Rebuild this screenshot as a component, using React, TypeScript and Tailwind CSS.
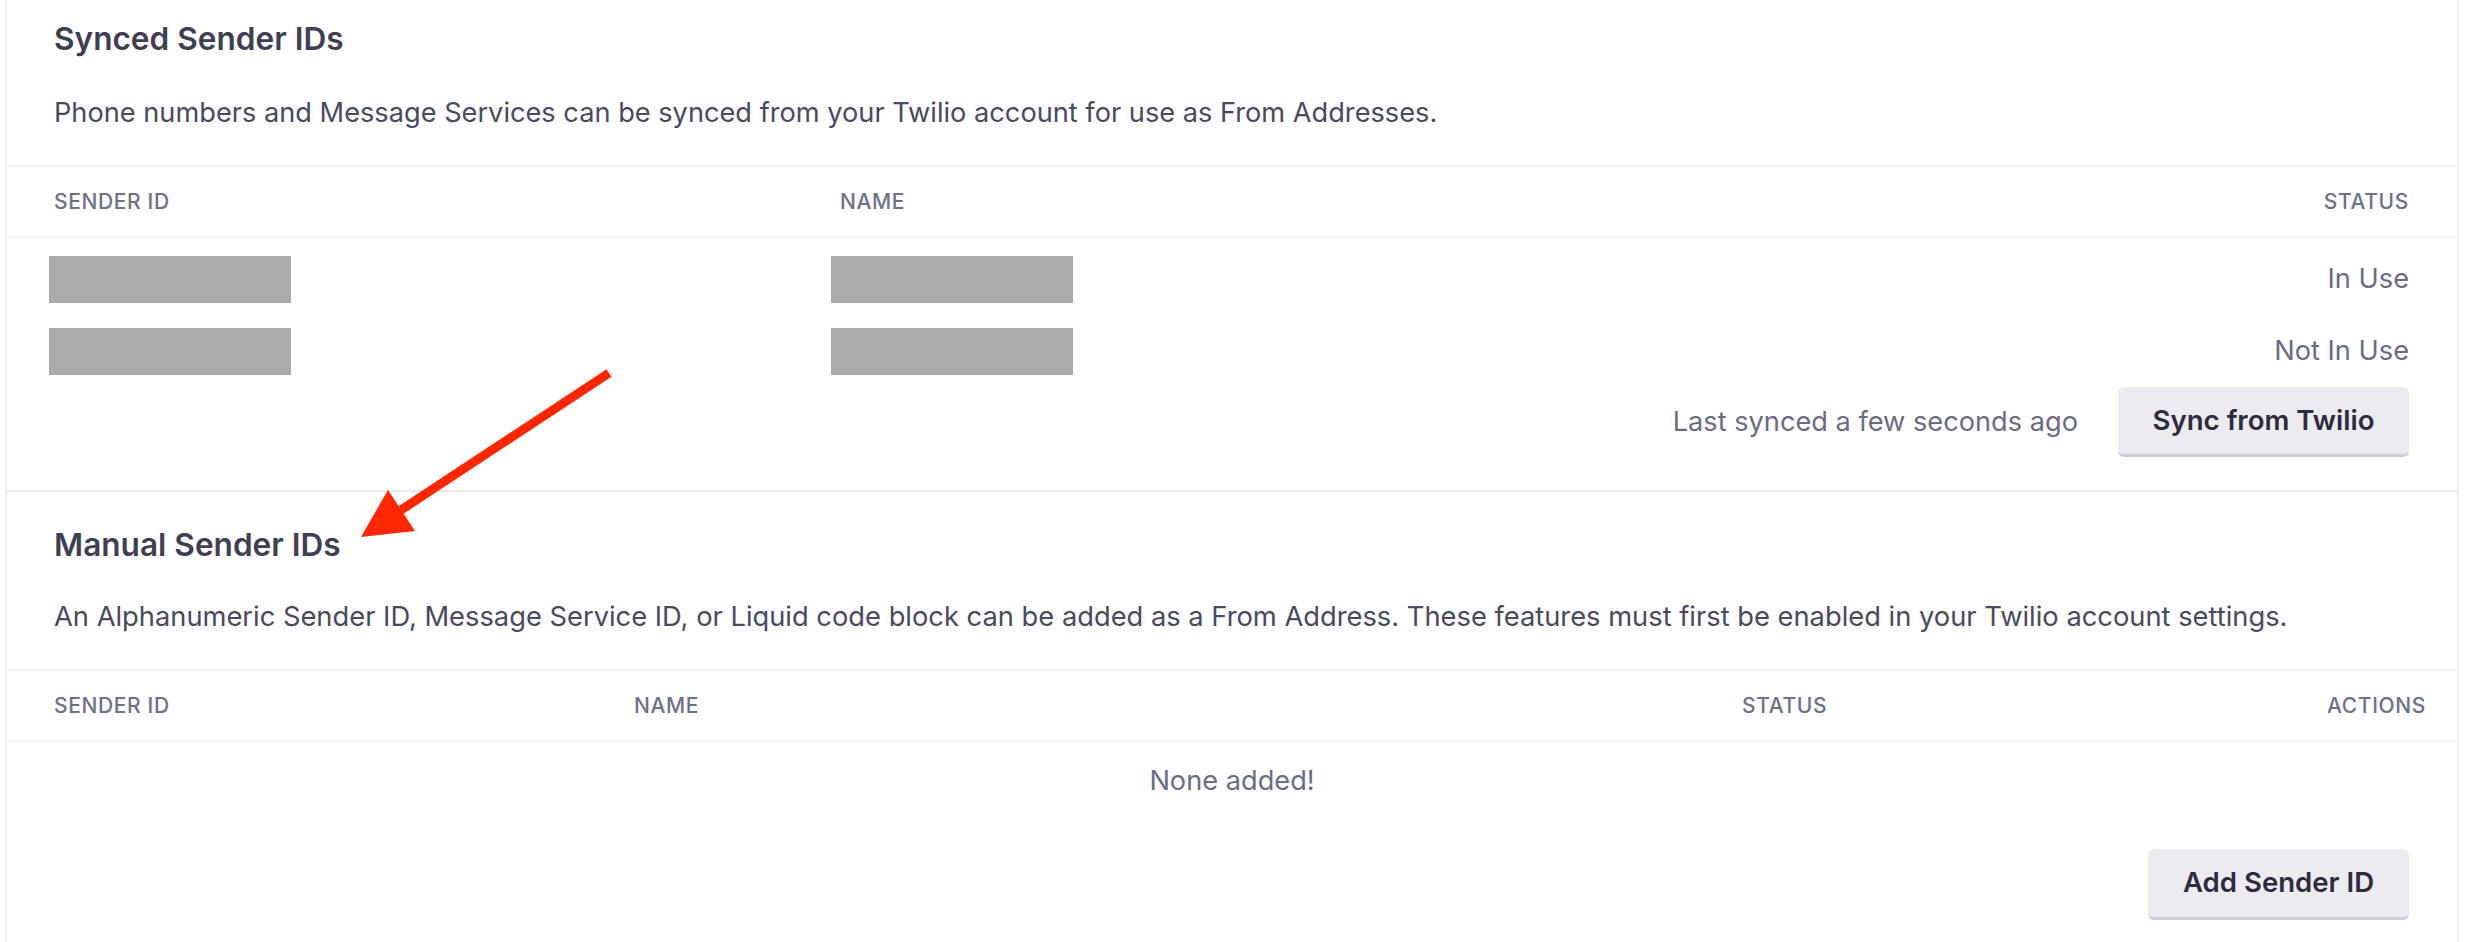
import React from 'react';

const font = { fontFamily: 'Inter, "Noto Sans", sans-serif' };

const Redacted = ({ shift }: { shift: string }) => <div className={`w-[242px] h-[47px] bg-[#aaaaaa] ${shift}`} />;

const Button = ({ label, width }: { label: string; width: string }) => (
    <button className={`${width} rounded-[6px] bg-[#ebebf0] border-b-[3px] border-[#cdcdd9] text-[27.6px] font-semibold text-[#2c2c3e] flex items-center justify-center`}>
        {label}
    </button>
);

const SyncedSection = () => {
    const rows = [{ status: 'In Use' }, { status: 'Not In Use' }];
    return (
        <section className="pt-[21px]">
            <h3 className="px-[47px] text-[31.6px] leading-[36px] font-semibold text-[#3f3f52]">Synced Sender IDs</h3>
            <p className="px-[47px] mt-[37px] text-[27.2px] leading-[38px] text-[#4a4a5e]">
                Phone numbers and Message Services can be synced from your Twilio account for use as From Addresses.
            </p>
            <div className="mt-[33px] border-t-2 border-[#f4f4f6]" />
            <div className="h-[71px] pl-[47px] pr-[48px] flex items-center border-b-2 border-[#f4f4f6] text-[21px] font-medium uppercase tracking-[0.03em] text-[#6e7187]">
                <div className="w-[786px]">Sender ID</div>
                <div className="flex-1">Name</div>
                <div>Status</div>
            </div>
            <div className="pt-[5px]">
                {rows.map((row, i) => (
                    <div key={i} className="h-[72px] pl-[47px] pr-[48px] flex items-center text-[27.2px] text-[#6a6d82]">
                        <div className="w-[786px]"><Redacted shift="-ml-[5px]" /></div>
                        <div className="flex-1"><Redacted shift="-ml-[9px]" /></div>
                        <div>{row.status}</div>
                    </div>
                ))}
            </div>
            <div className="pl-[47px] pr-[48px] flex items-center justify-end gap-[40px]">
                <span className="text-[27.2px] text-[#6a6d82]">Last synced a few seconds ago</span>
                <Button label="Sync from Twilio" width="w-[291px] h-[70px]" />
            </div>
        </section>
    );
};

const ManualSection = () => (
    <section className="mt-[33px] border-t-2 border-[#ebebef] pt-[35px]">
        <h3 className="px-[47px] text-[31.6px] leading-[36px] font-semibold text-[#3f3f52]">Manual Sender IDs</h3>
        <p className="px-[47px] mt-[35px] text-[27.3px] leading-[38px] text-[#4a4a5e]">
            An Alphanumeric Sender ID, Message Service ID, or Liquid code block can be added as a From Address. These features must first be enabled in your Twilio account settings.
        </p>
        <div className="mt-[33px] border-t-2 border-[#f4f4f6]" />
        <div className="h-[71px] pl-[47px] pr-[31px] flex items-center border-b-2 border-[#f4f4f6] text-[21px] font-medium uppercase tracking-[0.03em] text-[#6e7187]">
            <div className="w-[580px]">Sender ID</div>
            <div className="w-[1108px]">Name</div>
            <div className="flex-1">Status</div>
            <div>Actions</div>
        </div>
        <div className="h-[78px] flex items-center justify-center text-[27.2px] text-[#6a6d82]">None added!</div>
        <div className="mt-[29px] pl-[47px] pr-[48px] flex justify-end">
            <Button label="Add Sender ID" width="w-[261px] h-[71px]" />
        </div>
    </section>
);

const Arrow = () => (
    <svg className="absolute left-0 top-0 pointer-events-none" width="700" height="600" viewBox="0 0 700 600">
        <line x1="609" y1="373" x2="398" y2="512" stroke="#ff2600" strokeWidth="9" />
        <polygon points="361,537 388,490 415,531" fill="#ff2600" />
    </svg>
);

const App = () => {
    return (
        <div className="w-full h-[942px] overflow-hidden bg-white relative" style={font}>
            <div className="ml-[5px] mr-[7px] h-full border-l-2 border-r-2 border-[#eeeef2]">
                <SyncedSection />
                <ManualSection />
            </div>
            <Arrow />
        </div>
    );
};

export default App;
